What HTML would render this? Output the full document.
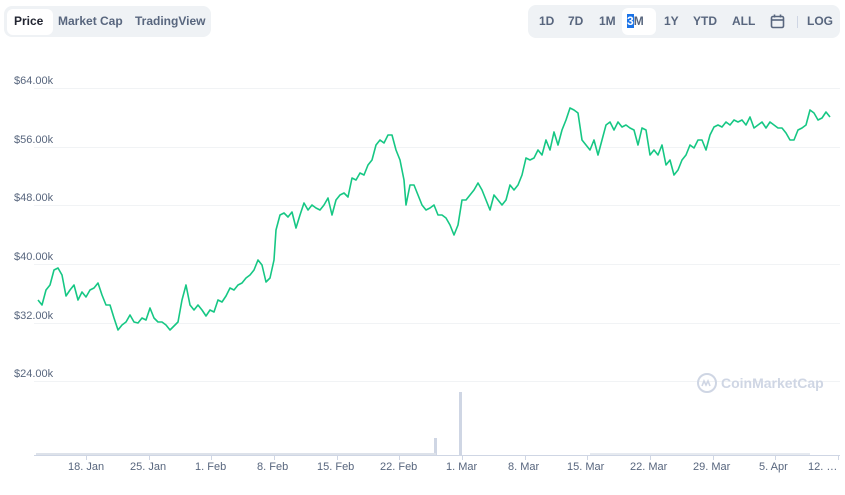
<!DOCTYPE html>
<html><head><meta charset="utf-8"><style>
body{margin:0;width:845px;height:495px;background:#fff;font-family:"Liberation Sans",sans-serif;overflow:hidden;position:relative}
.tabs{position:absolute;left:4px;top:6px;height:31px;width:207px;background:#eff2f5;border-radius:8px}
.tabs span{position:absolute;top:9px;font-size:12px;font-weight:bold;color:#58667e;line-height:1}
.sel{position:absolute;left:3px;top:3px;width:46px;height:26px;background:#fff;border-radius:6px}
.rng{position:absolute;left:528px;top:5px;height:33px;width:312px;background:#eff2f5;border-radius:8px}
.rng span{position:absolute;top:10px;font-size:12px;font-weight:bold;color:#58667e;line-height:1}
.rsel{position:absolute;left:94px;top:3px;width:34px;height:27px;background:#fff;border-radius:6px}
.lbl{position:absolute;left:14px;font-size:11px;color:#58667e}
.xl{position:absolute;top:461px;font-size:11px;color:#58667e}
</style></head><body>
<div class="tabs"><div class="sel"></div><span style="left:10px;color:#222531">Price</span><span style="left:54px">Market Cap</span><span style="left:131px">TradingView</span></div>
<div class="rng"><div class="rsel"></div>
<span style="left:11px">1D</span><span style="left:40px">7D</span><span style="left:71px">1M</span><span style="left:99px"><b style="background:#1a73e8;color:#fff">3</b>M</span><span style="left:136px">1Y</span><span style="left:165px">YTD</span><span style="left:204px">ALL</span>
<svg style="position:absolute;left:242px;top:9px" width="15" height="15" viewBox="0 0 15 15" fill="none" stroke="#58667e" stroke-width="1.6"><rect x="1.5" y="2.5" width="12" height="11" rx="1.5"/><line x1="1.5" y1="6" x2="13.5" y2="6"/><line x1="4.5" y1="0.5" x2="4.5" y2="3.5"/><line x1="10.5" y1="0.5" x2="10.5" y2="3.5"/></svg>
<div style="position:absolute;left:269px;top:11px;width:1px;height:12px;background:#cfd6e4"></div>
<span style="left:279px">LOG</span></div>
<div class="lbl" style="top:75px">$64.00k</div>
<div class="lbl" style="top:134px">$56.00k</div>
<div class="lbl" style="top:192px">$48.00k</div>
<div class="lbl" style="top:251px">$40.00k</div>
<div class="lbl" style="top:310px">$32.00k</div>
<div class="lbl" style="top:368px">$24.00k</div>
<svg style="position:absolute;left:0;top:0" width="845" height="495">
<g stroke="#f1f3f5" stroke-width="1">
<line x1="34" y1="88.5" x2="840" y2="88.5"/><line x1="34" y1="147.5" x2="840" y2="147.5"/><line x1="34" y1="205.5" x2="840" y2="205.5"/><line x1="34" y1="264.5" x2="840" y2="264.5"/><line x1="34" y1="323.5" x2="840" y2="323.5"/><line x1="34" y1="381.5" x2="840" y2="381.5"/></g>
<line x1="34" y1="455.5" x2="840" y2="455.5" stroke="#cfd6e4"/>
<g stroke="#cfd6e4"><line x1="86.5" y1="455" x2="86.5" y2="460"/><line x1="149.5" y1="455" x2="149.5" y2="460"/><line x1="211.5" y1="455" x2="211.5" y2="460"/><line x1="274.5" y1="455" x2="274.5" y2="460"/><line x1="337.5" y1="455" x2="337.5" y2="460"/><line x1="399.5" y1="455" x2="399.5" y2="460"/><line x1="462.5" y1="455" x2="462.5" y2="460"/><line x1="525.5" y1="455" x2="525.5" y2="460"/><line x1="587.5" y1="455" x2="587.5" y2="460"/><line x1="650.5" y1="455" x2="650.5" y2="460"/><line x1="713.5" y1="455" x2="713.5" y2="460"/><line x1="775.5" y1="455" x2="775.5" y2="460"/><line x1="838.5" y1="455" x2="838.5" y2="460"/></g>
<rect x="434" y="438" width="3" height="17" fill="#cfd6e4"/><rect x="459" y="392" width="3" height="63" fill="#cfd6e4"/>
<rect x="36" y="453" width="400" height="2" fill="#dde2ea"/><rect x="590" y="453" width="220" height="2" fill="#e6eaf0"/>
<polyline fill="none" stroke="#16c784" stroke-width="1.6" stroke-linejoin="round" points="38,300 42,305 46,290 50,285 54,270 58,268 62,275 66,296 70,290 74,285 78,300 82,292 86,297 90,290 94,288 98,283 102,295 106,305 110,305 114,318 118,330 122,325 126,322 130,315 134,322 138,323 142,318 146,320 150,308 154,318 158,322 162,322 166,325 170,330 174,326 178,322 182,300 186,285 190,305 194,310 198,305 202,310 206,316 210,310 214,312 218,300 222,302 226,296 230,288 234,290 238,285 242,283 246,278 250,275 254,270 258,260 262,265 266,282 270,278 274,260 276,230 280,215 284,213 288,217 292,212 296,228 300,215 304,203 308,210 312,205 316,208 320,210 324,205 328,198 332,215 336,200 340,195 344,193 348,197 352,178 356,180 360,173 364,175 368,165 372,160 376,145 380,140 384,143 388,135 392,135 396,150 400,160 404,180 406,205 410,185 414,185 418,195 422,205 426,210 430,208 434,205 438,215 442,215 446,218 450,225 454,235 458,225 462,200 466,200 470,195 474,190 478,183 482,190 486,200 490,210 494,195 498,200 502,205 506,200 510,185 514,190 518,185 522,175 526,158 530,160 534,158 538,150 542,155 546,140 550,150 554,132 558,145 562,130 566,120 570,108 574,110 578,113 582,140 586,145 590,150 594,140 598,155 602,140 606,125 610,122 614,130 618,122 622,127 626,125 630,128 634,130 638,145 642,128 646,130 650,155 654,150 658,155 662,145 666,165 670,160 674,175 678,170 682,160 686,155 690,145 694,148 698,140 702,140 706,150 710,135 714,127 718,125 722,127 726,122 730,125 734,120 738,122 742,120 746,125 750,117 754,128 758,125 762,122 766,128 770,122 774,125 778,128 782,128 786,133 790,140 794,140 798,130 802,128 806,125 810,110 814,113 818,120 822,118 826,112 830,117"/>
<circle cx="707" cy="383" r="9" fill="none" stroke="#cfd6e4" stroke-width="2"/>
<path d="M702 386 l2-5 2 4 2-4 2 5" fill="none" stroke="#cfd6e4" stroke-width="1.6"/>
<text x="721" y="388" font-family="Liberation Sans,sans-serif" font-size="14" font-weight="bold" fill="#cfd6e4">CoinMarketCap</text>
</svg>
<div class="xl" style="left:68px">18. Jan</div><div class="xl" style="left:130px">25. Jan</div><div class="xl" style="left:195px">1. Feb</div><div class="xl" style="left:257px">8. Feb</div><div class="xl" style="left:317px">15. Feb</div><div class="xl" style="left:380px">22. Feb</div><div class="xl" style="left:446px">1. Mar</div><div class="xl" style="left:508px">8. Mar</div><div class="xl" style="left:567px">15. Mar</div><div class="xl" style="left:630px">22. Mar</div><div class="xl" style="left:693px">29. Mar</div><div class="xl" style="left:759px">5. Apr</div><div class="xl" style="left:808px">12. …</div>
</body></html>
